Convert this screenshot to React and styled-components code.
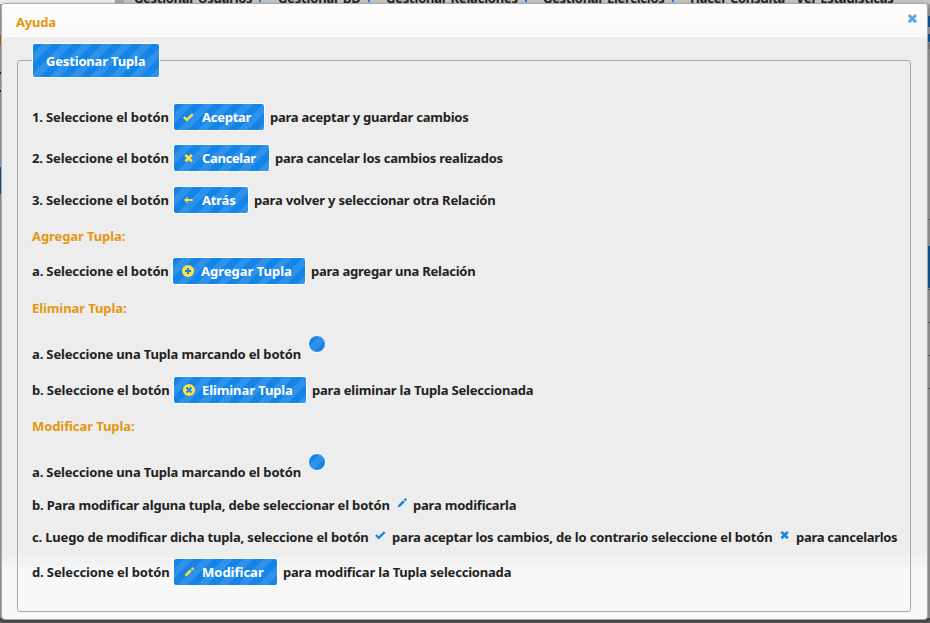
import React from "react";
import styled, { createGlobalStyle } from "styled-components";

const GlobalStyle = createGlobalStyle`
  * { box-sizing: border-box; }
  body { margin: 0; overflow: hidden; }
`;

const stripes = `
  background-color: #1484e6;
  background-image: linear-gradient(135deg, #1484e6 25%, #2f92ea 25%, #2f92ea 50%, #1484e6 50%, #1484e6 75%, #2f92ea 75%);
  background-size: 20px 20px;
`;

const Page = styled.div`
  position: relative;
  width: 930px;
  height: 623px;
  overflow: hidden;
  background: linear-gradient(90deg, #a9a9a9, #a0a0a0);
  font: bold 13px/18px "Noto Sans", "Open Sans", sans-serif;
  color: #222;
  display: flex;
  flex-direction: column;
  justify-content: space-between;
`;

const TopStrip = styled.div`
  height: 4px;
  display: flex;
  overflow: hidden;
`;
const SideTop = styled.div`
  width: 116px;
  background: #eee;
  border-right: 1px solid #999;
`;
const MenuBar = styled.div`
  flex: 1;
  display: flex;
  margin-left: 8px;
  padding-left: 10px;
  background: #c6c6c6;
`;
const MenuItem = styled.span`
  flex: none;
  width: ${(p) => p.$w}px;
  margin-top: -11px;
  height: 18px;
  white-space: nowrap;
  letter-spacing: ${(p) => p.$ls || 0}px;
`;
const MenuMark = styled.i`
  display: inline-block;
  width: 2px;
  height: 2px;
  margin-left: 7px;
  vertical-align: 1px;
  background: #1484e6;
`;
const BottomStrip = styled.div`
  height: 5px;
  background: linear-gradient(#484848, #6a6a6a);
`;

const Edge = styled.div`
  position: absolute;
  top: 12px;
  ${(p) => (p.$right ? "right: 0; width: 2px;" : "left: 0; width: 1px;")}
  display: flex;
  flex-direction: column;
`;
const EdgeBlock = styled.div`
  height: ${(p) => p.$h}px;
  margin-top: ${(p) => p.$gap}px;
  background: ${(p) => p.$c};
`;

const Dialog = styled.section`
  position: absolute;
  left: 1px;
  top: 3px;
  width: 927px;
  height: 617px;
  border: 1px solid #aaa;
  border-radius: 4px;
  background: linear-gradient(#ededed 0, #ededed 548px, #f8f8f8 568px);
  box-shadow: 0 2px 5px rgba(0, 0, 0, 0.4);
  display: flex;
  flex-direction: column;
`;
const Header = styled.header`
  height: 33px;
  flex: none;
  padding: 0 9px 0 14px;
  display: flex;
  justify-content: space-between;
  background: linear-gradient(#fefefe, #f8f8f8);
  border-radius: 3px 3px 0 0;
`;
const Title = styled.h1`
  margin: 9px 0 0;
  font: inherit;
  letter-spacing: -0.2px;
  color: #e69710;
`;
const Close = styled.button`
  width: 12px;
  height: 12px;
  margin-top: 9px;
  padding: 0;
  border: 0;
  background: none;
  display: flex;
`;

const Fieldset = styled.div`
  margin: 23px 0 0 15px;
  width: 894px;
  height: 552px;
  border: 1px solid #a8a8a8;
  border-radius: 3px;
  padding: 0 0 0 14px;
  display: flex;
  flex-direction: column;
  align-items: flex-start;
`;
const Legend = styled.div`
  flex: none;
  margin: -18px 0 23px;
  width: 128px;
  height: 35px;
  border: 1px solid #fff;
  border-radius: 3px;
  ${stripes}
  color: #fff;
  padding: 8px 0 0 13px;
  white-space: nowrap;
  letter-spacing: -0.17px;
`;
const Row = styled.div`
  flex: none;
  display: flex;
  align-items: center;
  height: 28px;
  margin-top: ${(p) => p.$gap}px;
`;
const Text = styled.span`
  flex: none;
  width: ${(p) => p.$w}px;
  white-space: nowrap;
  letter-spacing: ${(p) => (p.$ls === undefined ? -0.13 : p.$ls)}px;
`;
const SectionTitle = styled(Text)`
  color: #e69710;
  letter-spacing: -0.09px;
`;
const Button = styled.span`
  flex: none;
  display: flex;
  align-items: center;
  width: ${(p) => p.$w}px;
  height: 28px;
  margin-right: 5px;
  padding-left: 7px;
  border: 1px solid #fff;
  border-radius: 3px;
  ${stripes}
  color: #fff;
  white-space: nowrap;
  letter-spacing: ${(p) => p.$ls || 0}px;
`;
const Svg = styled.svg`
  flex: none;
  width: 16px;
  height: 16px;
  margin-right: ${(p) => p.$mr || 0}px;
  margin-top: ${(p) => p.$mt || 0}px;
`;
const Radio = styled.i`
  width: 18px;
  height: 18px;
  margin: -21px 0 0;
  border: 1px solid #fff;
  border-radius: 50%;
  ${stripes}
  background-position: 1px 0;
`;

const glyphs = {
  check: <path d="M2.9 8l2.8 2.8 6-5.6" stroke="currentColor" strokeWidth="2.3" fill="none" />,
  cross: (
    <path d="M4.4 4.9l6.4 6.4M10.8 4.9l-6.4 6.4" stroke="currentColor" strokeWidth="2.7" fill="none" />
  ),
  arrow: <path d="M3 8l3.7-3.2V7h5v2h-5v2.2z" fill="currentColor" />,
  plus: (
    <>
      <circle cx="8" cy="8" r="6.1" fill="currentColor" />
      <path d="M8 5v6M5 8h6" stroke="#1484e6" strokeWidth="2" />
    </>
  ),
  circleX: (
    <>
      <circle cx="8" cy="8" r="6.1" fill="currentColor" />
      <path d="M5.5 5.5l5 5M10.5 5.5l-5 5" stroke="#1484e6" strokeWidth="1.8" />
    </>
  ),
  pencil: (
    <>
      <path d="M3.8 12.4l.7-2.6 4.6-4.6 1.8 1.8-4.6 4.6z" fill="currentColor" />
      <path d="M9.8 4.5l1.5-1.5 1.8 1.8-1.5 1.5z" fill="currentColor" />
    </>
  ),
};
const Icon = ({ name, color = "#ffe045", mr, mt }) => (
  <Svg viewBox="0 0 16 16" color={color} $mr={mr} $mt={mt}>{glyphs[name]}</Svg>
);
const IconButton = ({ icon, w, ls, children }) => (
  <Button $w={w} $ls={ls}>
    <Icon name={icon} mr={5} />
    {children}
  </Button>
);

export default function App() {
  return (
    <Page>
      <GlobalStyle />
      <TopStrip>
        <SideTop />
        <MenuBar>
          <MenuItem $w={144} $ls={-0.3}>Gestionar Usuarios<MenuMark /></MenuItem>
          <MenuItem $w={108} $ls={-0.2}>Gestionar BD<MenuMark /></MenuItem>
          <MenuItem $w={157} $ls={-0.22}>Gestionar Relaciones<MenuMark /></MenuItem>
          <MenuItem $w={147} $ls={-0.28}>Gestionar Ejercicios<MenuMark /></MenuItem>
          <MenuItem $w={106} $ls={-0.25}>Hacer Consulta</MenuItem>
          <MenuItem $w={110} $ls={-0.25}>Ver Estadísticas</MenuItem>
        </MenuBar>
      </TopStrip>
      <BottomStrip />
      <Edge>
        <EdgeBlock $gap={23} $h={10} $c="#b97700" />
        <EdgeBlock $gap={27} $h={2} $c="#222" />
        <EdgeBlock $gap={16} $h={2} $c="#222" />
        <EdgeBlock $gap={75} $h={27} $c="#125a9c" />
      </Edge>
      <Edge $right>
        <EdgeBlock $gap={4} $h={11} $c="#125fa5" />
        <EdgeBlock $gap={7} $h={8} $c="#125fa5" />
        <EdgeBlock $gap={1} $h={6} $c="#858585" />
        <EdgeBlock $gap={170} $h={1} $c="#777" />
        <EdgeBlock $gap={26} $h={42} $c="#125fa5" />
        <EdgeBlock $gap={1} $h={1} $c="#666" />
        <EdgeBlock $gap={32} $h={1} $c="#666" />
        <EdgeBlock $gap={32} $h={1} $c="#666" />
        <EdgeBlock $gap={32} $h={1} $c="#666" />
      </Edge>
      <Dialog>
        <Header>
          <Title>Ayuda</Title>
          <Close aria-label="Cerrar">
            <svg width="12" height="12" viewBox="0 0 12 12">
              <path d="M2.8 2l7.2 7.2M10 2l-7.2 7.2" stroke="#57a6e6" strokeWidth="3" />
            </svg>
          </Close>
        </Header>
        <Fieldset>
          <Legend>Gestionar Tupla</Legend>
          <Row $gap={2}>
            <Text $w={141}>1. Seleccione el botón</Text>
            <IconButton icon="check" w={92} ls={-0.25}>Aceptar</IconButton>
            <Text $ls={-0.24}>para aceptar y guardar cambios</Text>
          </Row>
          <Row $gap={13}>
            <Text $w={141}>2. Seleccione el botón</Text>
            <IconButton icon="cross" w={97} ls={-0.35}>Cancelar</IconButton>
            <Text $ls={-0.23}>para cancelar los cambios realizados</Text>
          </Row>
          <Row $gap={14}>
            <Text $w={141}>3. Seleccione el botón</Text>
            <IconButton icon="arrow" w={76} ls={-0.2}>Atrás</IconButton>
            <Text $ls={-0.21}>para volver y seleccionar otra Relación</Text>
          </Row>
          <Row $gap={8}><SectionTitle>Agregar Tupla:</SectionTitle></Row>
          <Row $gap={7}>
            <Text $w={140} $ls={-0.15}>a. Seleccione el botón</Text>
            <IconButton icon="plus" w={134}>Agregar Tupla</IconButton>
            <Text $ls={-0.24}>para agregar una Relación</Text>
          </Row>
          <Row $gap={9}><SectionTitle>Eliminar Tupla:</SectionTitle></Row>
          <Row $gap={18}>
            <Text $w={276} $ls={-0.15}>a. Seleccione una Tupla marcando el botón</Text>
            <Radio />
          </Row>
          <Row $gap={8}>
            <Text $w={141}>b. Seleccione el botón</Text>
            <IconButton icon="circleX" w={134} ls={-0.1}>Eliminar Tupla</IconButton>
            <Text $ls={-0.19}>para eliminar la Tupla Seleccionada</Text>
          </Row>
          <Row $gap={8}><SectionTitle>Modificar Tupla:</SectionTitle></Row>
          <Row $gap={18}>
            <Text $w={276} $ls={-0.15}>a. Seleccione una Tupla marcando el botón</Text>
            <Radio />
          </Row>
          <Row $gap={5}>
            <Text $w={362} $ls={-0.18}>b. Para modificar alguna tupla, debe seleccionar el botón</Text>
            <Icon name="pencil" color="#1484e6" mr={3} mt={-5} />
            <Text $ls={-0.2}>para modificarla</Text>
          </Row>
          <Row $gap={4}>
            <Text $w={341} $ls={-0.17}>c. Luego de modificar dicha tupla, seleccione el botón</Text>
            <Icon name="check" color="#1484e6" mr={3} mt={-5} />
            <Text $w={385} $ls={-0.18}>para aceptar los cambios, de lo contrario seleccione el botón</Text>
            <Icon name="cross" color="#1484e6" mr={3} mt={-5} />
            <Text $ls={-0.3}>para cancelarlos</Text>
          </Row>
          <Row $gap={7}>
            <Text $w={141}>d. Seleccione el botón</Text>
            <IconButton icon="pencil" w={105}>Modificar</IconButton>
            <Text $ls={-0.2}>para modificar la Tupla seleccionada</Text>
          </Row>
        </Fieldset>
      </Dialog>
    </Page>
  );
}
